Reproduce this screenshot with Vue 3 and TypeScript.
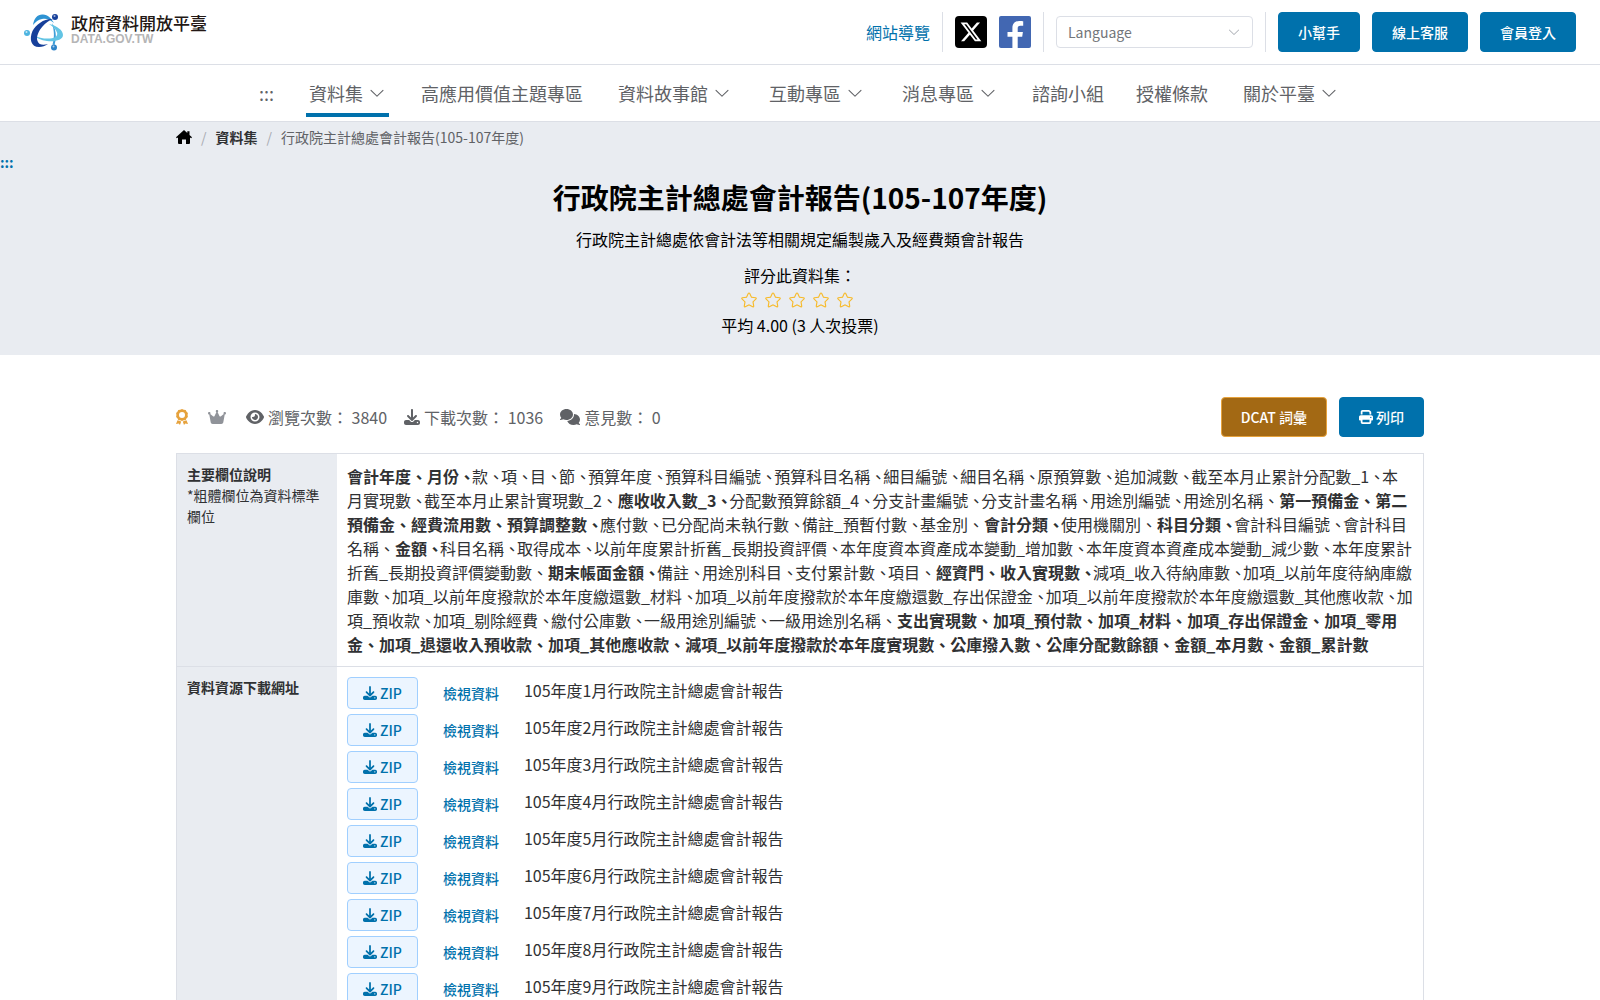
<script setup lang="ts">
interface NavItem {
  label: string
  menu?: boolean
  active?: boolean
}

interface Field {
  name: string
  bold: boolean
}

const navItems: NavItem[] = [
  { label: '資料集', menu: true, active: true },
  { label: '高應用價值主題專區' },
  { label: '資料故事館', menu: true },
  { label: '互動專區', menu: true },
  { label: '消息專區', menu: true },
  { label: '諮詢小組' },
  { label: '授權條款' },
  { label: '關於平臺', menu: true },
]

// Names starting with * are standard fields and are set in bold.
const fieldSource =
  '*會計年度、*月份、款、項、目、節、預算年度、預算科目編號、預算科目名稱、細目編號、細目名稱、原預算數、追加減數、截至本月止累計分配數_1、本月實現數、截至本月止累計實現數_2、*應收收入數_3、分配數預算餘額_4、分支計畫編號、分支計畫名稱、用途別編號、用途別名稱、*第一預備金、*第二預備金、*經費流用數、*預算調整數、應付數、已分配尚未執行數、備註_預暫付數、基金別、*會計分類、使用機關別、*科目分類、會計科目編號、會計科目名稱、*金額、科目名稱、取得成本、以前年度累計折舊_長期投資評價、本年度資本資產成本變動_增加數、本年度資本資產成本變動_減少數、本年度累計折舊_長期投資評價變動數、*期末帳面金額、備註、用途別科目、支付累計數、項目、*經資門、*收入實現數、減項_收入待納庫數、加項_以前年度待納庫繳庫數、加項_以前年度撥款於本年度繳還數_材料、加項_以前年度撥款於本年度繳還數_存出保證金、加項_以前年度撥款於本年度繳還數_其他應收款、加項_預收款、加項_剔除經費、繳付公庫數、一級用途別編號、一級用途別名稱、*支出實現數、*加項_預付款、*加項_材料、*加項_存出保證金、*加項_零用金、*加項_退還收入預收款、*加項_其他應收款、*減項_以前年度撥款於本年度實現數、*公庫撥入數、*公庫分配數餘額、*金額_本月數、*金額_累計數'

const fields: Field[] = fieldSource.split('、').map((entry) => ({
  name: entry.replace('*', ''),
  bold: entry.startsWith('*'),
}))

const separator = (index: number): string => (index < fields.length - 1 ? '、' : '')

const months: number[] = Array.from({ length: 12 }, (_, i) => i + 1)

const arrowPath =
  'M831.872 340.864 512 652.672 192.128 340.864a30.592 30.592 0 0 0-42.752 0 29.12 29.12 0 0 0 0 41.6L489.664 714.24a32 32 0 0 0 44.672 0l340.288-331.712a29.12 29.12 0 0 0 0-41.728 30.592 30.592 0 0 0-42.752 0z'
const starPath =
  'm512 747.84 228.16 119.936a6.4 6.4 0 0 0 9.28-6.72l-43.52-254.08 184.512-179.904a6.4 6.4 0 0 0-3.52-10.88l-255.104-37.12L517.76 147.904a6.4 6.4 0 0 0-11.52 0L392.192 379.072l-255.104 37.12a6.4 6.4 0 0 0-3.52 10.88L318.08 606.976l-43.584 254.08a6.4 6.4 0 0 0 9.28 6.72L512 747.84zM313.6 924.48a70.4 70.4 0 0 1-102.144-74.24l37.888-220.928L88.96 472.96A70.4 70.4 0 0 1 128 352.896l221.76-32.256 99.2-200.96a70.4 70.4 0 0 1 126.208 0l99.2 200.96 221.824 32.256a70.4 70.4 0 0 1 39.04 120.064L774.72 629.376l37.888 220.928a70.4 70.4 0 0 1-102.144 74.24L512 820.096l-198.4 104.32z'
const downloadPath =
  'M288 32c0-17.7-14.3-32-32-32s-32 14.3-32 32V274.7l-73.4-73.4c-12.5-12.5-32.8-12.5-45.3 0s-12.5 32.8 0 45.3l128 128c12.5 12.5 32.8 12.5 45.3 0l128-128c12.5-12.5 12.5-32.8 0-45.3s-32.8-12.5-45.3 0L288 274.7V32zM64 352c-35.3 0-64 28.7-64 64v32c0 35.3 28.7 64 64 64H448c35.3 0 64-28.7 64-64V416c0-35.3-28.7-64-64-64H346.5l-45.3 45.3c-25 25-65.5 25-90.5 0L165.5 352H64zm368 56a24 24 0 1 1 0 48 24 24 0 1 1 0-48z'
</script>

<template>
  <header class="topbar">
    <a class="logo" href="#" aria-label="政府資料開放平臺">
      <svg class="logo-mark" viewBox="0 0 40 38" aria-hidden="true">
        <path d="M9 12C10 5 14 1 19 1.500c5 .5 8 3.500 11 8.500C26 6.500 22 5 18 6c-4 .8-6 2.500-9 6z" fill="#2e93d3" />
        <path d="M28 10c4 6 5 14 2.500 22l-2-.5c2-7 2-13-.5-21.500z" fill="#3e9fd8" />
        <path d="M25 11c8 2 14 6 14 11 0 5-8 7-16 6-6-.8-11-3-14-6 6 3 12 4 17 3.500 6-.6 8-3 7-6-1-3-4-6-8-8.500z" fill="#62c4e4" />
        <path d="M29 6C21 5 12 11 8.500 18 5 26 7 34 15 34c3.500 0 6-1 9-3-5 1.500-9 1-10.500-3-1.500-4 1-10 5-14.500C21.500 10 25 7.500 29 6z" fill="#17409a" />
        <circle cx="31" cy="4" r="3" fill="#17409a" />
        <circle cx="3" cy="20" r="3" fill="#4db4e0" />
        <circle cx="30" cy="34.500" r="3" fill="#2e83c8" />
        <circle cx="30.500" cy="3" r="1" fill="#fff" opacity=".6" />
        <circle cx="2.500" cy="19" r="1" fill="#fff" opacity=".7" />
        <circle cx="29.500" cy="33.500" r="1" fill="#fff" opacity=".6" />
      </svg>
      <span class="logo-text">
        <span class="logo-name">政府資料開放平臺</span>
        <span class="logo-domain">DATA.GOV.TW</span>
      </span>
    </a>
    <div class="tools">
      <a class="sitemap" href="#">網站導覽</a>
      <span class="rule"></span>
      <a class="social" href="#" aria-label="X">
        <svg viewBox="0 0 32 32" aria-hidden="true">
          <rect width="32" height="32" rx="4" fill="#000" />
          <path
            transform="translate(4.400 4.400) scale(.96)"
            d="M18.244 2.250h3.308l-7.227 8.260 8.502 11.240H16.170l-5.214-6.817L4.990 21.750H1.680l7.730-8.835L1.254 2.250H8.080l4.713 6.231zm-1.161 17.520h1.833L7.084 4.126H5.117z"
            fill="#fff"
          />
        </svg>
      </a>
      <a class="social" href="#" aria-label="Facebook">
        <svg viewBox="0 0 32 32" aria-hidden="true">
          <rect width="32" height="32" rx="2" fill="#4267b2" />
          <path d="M13.400 32V20.800H8.500v-4.900h4.900v-3.700c0-4.800 2.800-7.200 6.900-7.200 1.900 0 3.400.2 3.900.3v4.500h-2.800c-2.100 0-2.700 1.100-2.700 2.600v3.500h5.200l-.7 4.900h-4.500V32z" fill="#fff" />
        </svg>
      </a>
      <span class="rule"></span>
      <span class="language">
        <select aria-label="Language">
          <option>Language</option>
        </select>
        <svg class="language-arrow" viewBox="0 0 1024 1024" aria-hidden="true"><path :d="arrowPath" /></svg>
      </span>
      <span class="rule"></span>
      <button class="btn" type="button">小幫手</button>
      <button class="btn" type="button">線上客服</button>
      <button class="btn" type="button">會員登入</button>
    </div>
  </header>

  <nav class="nav">
    <a class="nav-item" href="#">:::</a>
    <a
      v-for="item in navItems"
      :key="item.label"
      class="nav-item"
      :class="{ 'has-menu': item.menu, active: item.active }"
      href="#"
    >
      {{ item.label }}
      <svg v-if="item.menu" viewBox="0 0 1024 1024" aria-hidden="true"><path :d="arrowPath" /></svg>
    </a>
  </nav>

  <section class="hero">
    <div class="container crumbs">
      <a class="home" href="#" aria-label="首頁">
        <svg viewBox="0 0 16 14" aria-hidden="true">
          <path d="M8 0 0 7.200l.8 1L2 7.400V13q0 1 1 1h3V9.500h4V14h3q1 0 1-1V7.400l1.200.8.8-1-2.500-2.300V1.200h-2.200v1.700z" />
        </svg>
      </a>
      <span class="slash">/</span>
      <a class="crumb-link" href="#">資料集</a>
      <span class="slash">/</span>
      <span>行政院主計總處會計報告(105-107年度)</span>
    </div>
    <a class="anchor" href="#">:::</a>
    <h1>行政院主計總處會計報告(105-107年度)</h1>
    <p class="summary">行政院主計總處依會計法等相關規定編製歲入及經費類會計報告</p>
    <p class="rate-label">評分此資料集：</p>
    <div class="stars">
      <button v-for="n in 5" :key="n" type="button" :aria-label="`${n}`">
        <svg viewBox="0 0 1024 1024" aria-hidden="true"><path :d="starPath" /></svg>
      </button>
    </div>
    <p class="average">平均 4.00 (3 人次投票)</p>
  </section>

  <main class="container">
    <div class="meta">
      <svg class="award" viewBox="0 0 12 16" aria-hidden="true">
        <path d="M6 0l1.800.7 1.900.3.900 1.700 1.300 1.400-.3 1.900.3 1.900-1.300 1.400-.9 1.700-1.900.3L6 12l-1.800-.7-1.900-.3-.9-1.700L.1 7.900.4 6 .1 4.100l1.300-1.400L2.300 1l1.900-.3zM6 3a3 3 0 1 0 0 6 3 3 0 0 0 0-6z" fill-rule="evenodd" />
        <path d="M1.500 11.300l1.700.5 2 .8L4 16l-1.300-1.400L0 15zM10.500 11.300l-1.700.5-2 .8L8 16l1.300-1.400L12 15z" />
      </svg>
      <svg class="crown" viewBox="0 0 576 512" aria-hidden="true">
        <path d="M309 106c11.400-7 19-19.700 19-34c0-22.100-17.900-40-40-40s-40 17.900-40 40c0 14.400 7.600 27 19 34L209.700 220.600c-9.100 18.200-32.700 23.400-48.600 10.700L72 160c5-6.700 8-15 8-24c0-22.100-17.900-40-40-40S0 113.900 0 136s17.900 40 40 40c.2 0 .5 0 .7 0L86.400 427.400c5.500 30.400 32 52.600 63 52.600H426.600c30.900 0 57.400-22.100 63-52.600L535.300 176c.2 0 .5 0 .7 0c22.100 0 40-17.900 40-40s-17.900-40-40-40s-40 17.900-40 40c0 9 3 17.300 8 24l-89.100 71.300c-15.900 12.700-39.500 7.500-48.600-10.700L309 106z" />
      </svg>
      <span class="stat">
        <svg class="eye" viewBox="0 0 576 512" aria-hidden="true">
          <path d="M288 32c-80.800 0-145.500 36.800-192.600 80.600C48.600 156 17.300 208 2.500 243.700c-3.300 7.900-3.300 16.700 0 24.600C17.300 304 48.600 356 95.400 399.400C142.500 443.200 207.200 480 288 480s145.500-36.800 192.600-80.600c46.800-43.500 78.100-95.400 93-131.100c3.300-7.900 3.300-16.700 0-24.600c-14.900-35.700-46.200-87.700-93-131.100C433.500 68.800 368.800 32 288 32zM144 256a144 144 0 1 1 288 0 144 144 0 1 1 -288 0zm144-64c0 35.300-28.700 64-64 64c-7.100 0-13.900-1.200-20.300-3.300c-5.500-1.800-11.900 1.600-11.700 7.400c.3 6.900 1.300 13.800 3.200 20.700c13.700 51.200 66.400 81.600 117.600 67.900s81.600-66.400 67.900-117.600c-11.100-41.500-47.800-69.400-88.600-71.100c-5.800-.2-9.200 6.100-7.400 11.700c2.100 6.400 3.300 13.200 3.300 20.300z" />
        </svg>
        瀏覽次數： 3840
      </span>
      <span class="stat">
        <svg class="download" viewBox="0 0 512 512" aria-hidden="true"><path :d="downloadPath" /></svg>
        下載次數： 1036
      </span>
      <span class="stat">
        <svg class="comments" viewBox="0 0 640 512" aria-hidden="true">
          <path d="M208 352c114.900 0 208-78.800 208-176S322.900 0 208 0S0 78.800 0 176c0 38.600 14.700 74.300 39.600 103.400c-3.500 9.400-8.700 17.700-14.200 24.700c-4.800 6.200-9.700 11-13.300 14.300c-1.800 1.600-3.300 2.900-4.300 3.700c-.5 .4-.9 .7-1.100 .8l-.2 .2C1 327.200-1.400 334.400 .8 340.900S9.100 352 16 352c21.800 0 43.800-5.600 62.100-12.500c9.200-3.500 17.800-7.400 25.200-11.400C134.100 343.300 169.800 352 208 352zM448 176c0 112.300-99.100 196.900-216.500 207C255.800 457.400 336.400 512 432 512c38.200 0 73.900-8.700 104.700-23.900c7.500 4 16 7.900 25.200 11.400c18.300 6.900 40.300 12.500 62.100 12.500c6.900 0 13.100-4.500 15.200-11.100c2.100-6.600-.2-13.800-5.800-17.900l-.2-.2c-.2-.2-.6-.4-1.100-.8c-1-.8-2.500-2-4.300-3.700c-3.600-3.300-8.500-8.100-13.300-14.300c-5.500-7-10.700-15.400-14.200-24.700c24.900-29 39.600-64.700 39.600-103.400c0-92.800-84.900-168.900-192.600-175.500c.4 5.100 .6 10.300 .6 15.500z" />
        </svg>
        意見數： 0
      </span>
      <span class="actions">
        <button class="btn dcat" type="button">DCAT 詞彙</button>
        <button class="btn" type="button">
          <svg viewBox="0 0 512 512" aria-hidden="true">
            <path d="M128 0C92.700 0 64 28.700 64 64v96h64V64H354.700L384 93.300V160h64V93.300c0-17-6.700-33.300-18.700-45.300L400 18.700C388 6.700 371.700 0 354.700 0H128zM384 352v32 64H128V384 368 352H384zm64 32h32c17.700 0 32-14.300 32-32V256c0-35.300-28.700-64-64-64H64c-35.300 0-64 28.700-64 64v96c0 17.700 14.300 32 32 32H64v64c0 35.300 28.700 64 64 64H384c35.300 0 64-28.700 64-64V384zM432 248a24 24 0 1 1 0 48 24 24 0 1 1 0-48z" />
          </svg>
          列印
        </button>
      </span>
    </div>

    <table class="detail">
      <tbody>
        <tr>
          <th scope="row">
            主要欄位說明
            <span class="note">*粗體欄位為資料標準欄位</span>
          </th>
          <td>
            <span
              v-for="(field, i) in fields"
              :key="i"
              :class="field.bold ? 'standard' : 'plain'"
            >{{ field.name }}{{ separator(i) }}</span>
          </td>
        </tr>
        <tr>
          <th scope="row">資料資源下載網址</th>
          <td>
            <ul class="files">
              <li v-for="m in months" :key="m">
                <button class="zip" type="button">
                  <svg viewBox="0 0 512 512" aria-hidden="true"><path :d="downloadPath" /></svg>
                  ZIP
                </button>
                <a class="view" href="#">檢視資料</a>
                <span class="file-name">105年度{{ m }}月行政院主計總處會計報告</span>
              </li>
            </ul>
          </td>
        </tr>
      </tbody>
    </table>
  </main>
</template>

<style>
body {
  margin: 0;
  background: #fff;
  color: #303133;
  font-family: "Noto Sans CJK TC", "Noto Sans", sans-serif;
  font-size: 16px;
  line-height: 24px;
}
</style>

<style scoped>
a {
  color: inherit;
  text-decoration: none;
}

button,
select {
  font-family: inherit;
}

svg {
  display: block;
  flex: none;
  fill: currentColor;
}

.container {
  width: 78%;
  margin: 0 auto;
}

.topbar {
  display: flex;
  align-items: center;
  justify-content: space-between;
  height: 64px;
  padding: 0 24px;
  border-bottom: 1px solid #dcdfe6;
}

.logo {
  display: flex;
  align-items: center;
  gap: 7px;
}

.logo-mark {
  width: 40px;
  height: 38px;
}

.logo-text {
  display: flex;
  flex-direction: column;
  padding-bottom: 4px;
}

.logo-name {
  color: #231815;
  font-size: 17px;
  font-weight: 500;
  line-height: 18px;
}

.logo-domain {
  color: #b5b5b6;
  font-family: "Liberation Sans", sans-serif;
  font-size: 12px;
  font-weight: 700;
  line-height: 14px;
}

.tools {
  display: flex;
  align-items: center;
  gap: 12px;
}

.sitemap {
  color: #0071ac;
}

.rule {
  width: 1px;
  height: 40px;
  background: #dcdfe6;
}

.social svg {
  width: 32px;
  height: 32px;
}

.language {
  display: grid;
  align-items: center;
}

.language select {
  grid-area: 1 / 1;
  box-sizing: border-box;
  width: 197px;
  height: 32px;
  padding: 0 11px;
  border: 1px solid #dcdfe6;
  border-radius: 4px;
  background: #fff;
  color: #73767a;
  font-size: 14px;
  appearance: none;
}

.language-arrow {
  grid-area: 1 / 1;
  justify-self: end;
  width: 14px;
  height: 14px;
  margin-right: 12px;
  color: #a8abb2;
  pointer-events: none;
}

.btn {
  display: flex;
  align-items: center;
  gap: 3px;
  height: 40px;
  padding: 0 19px;
  border: 1px solid #0071ac;
  border-radius: 4px;
  background: #0071ac;
  color: #fff;
  font-size: 14px;
  font-weight: 500;
}

.btn svg {
  width: 14px;
  height: 14px;
}

.btn.dcat {
  border-color: #e6a23c;
  background: #a36914;
}

.nav {
  display: flex;
  justify-content: center;
  gap: 32px;
  height: 56px;
  border-bottom: 1px solid #dcdfe6;
  color: #606266;
  font-size: 18px;
}

.nav-item {
  display: flex;
  align-items: center;
  gap: 5px;
  height: 48px;
  margin-top: 4px;
  box-sizing: border-box;
  border-top: 4px solid transparent;
  border-bottom: 4px solid transparent;
}

.nav-item.has-menu {
  padding: 0 3px;
}

.nav-item.active {
  border-bottom-color: #0071ac;
}

.nav-item svg {
  width: 18px;
  height: 18px;
}

.hero {
  display: flow-root;
  padding-bottom: 18px;
  background: #e9ecf1;
  color: #000;
  text-align: center;
}

.crumbs {
  display: flex;
  align-items: center;
  height: 30px;
  color: #606266;
  font-size: 14px;
}

.home {
  color: #000;
}

.home svg {
  width: 16px;
  height: 14px;
}

.slash {
  margin: 0 9px;
  color: #a8abb2;
}

.crumb-link {
  color: #303133;
  font-weight: 700;
}

.anchor {
  display: block;
  height: 20px;
  color: #0071ac;
  font-size: 14px;
  font-weight: 700;
  line-height: 20px;
  text-align: left;
}

h1 {
  margin: 5px 0 0;
  font-size: 28px;
  font-weight: 700;
  line-height: 40px;
}

p {
  margin: 0;
}

.summary {
  margin-top: 10px;
}

.rate-label {
  margin-top: 12px;
}

.stars {
  display: flex;
  justify-content: center;
  height: 26px;
}

.stars button {
  display: flex;
  align-items: center;
  padding: 0 6px 0 0;
  border: 0;
  background: none;
  color: #f7ba2a;
}

.stars svg {
  width: 18px;
  height: 18px;
}

.meta {
  display: flex;
  align-items: center;
  height: 40px;
  margin: 42px 0 16px;
  color: #606266;
}

.award {
  width: 12px;
  height: 16px;
  margin-right: 20px;
  color: #e6a23c;
}

.crown {
  width: 18px;
  height: 16px;
  margin-right: 20px;
  color: #909399;
}

.stat {
  display: flex;
  align-items: center;
  gap: 4px;
  margin-right: 17px;
}

.eye {
  width: 18px;
  height: 16px;
}

.download {
  width: 16px;
  height: 16px;
}

.comments {
  width: 20px;
  height: 16px;
}

.actions {
  display: flex;
  gap: 12px;
  margin-left: auto;
}

.detail {
  width: 100%;
  border: 1px solid #dcdfe6;
  border-spacing: 0;
  table-layout: fixed;
}

.detail th,
.detail td {
  padding: 10px;
  text-align: left;
  vertical-align: top;
}

.detail th {
  box-sizing: border-box;
  width: 160px;
  background: #e9ecf1;
  font-size: 14px;
  font-weight: 700;
  line-height: 21px;
}

.detail tr + tr > * {
  border-top: 1px solid #dcdfe6;
}

.note {
  display: block;
  font-weight: 400;
}

.standard {
  font-weight: 700;
}

.plain {
  margin-left: -3px;
}

.files {
  margin: 0;
  padding: 0;
  list-style: none;
}

.files li {
  display: flex;
  align-items: center;
  margin-bottom: 5px;
}

.zip {
  display: flex;
  align-items: center;
  gap: 3px;
  height: 32px;
  padding: 0 15px;
  border: 1px solid #a0cfff;
  border-radius: 4px;
  background: #ecf5ff;
  color: #0071ac;
  font-size: 14px;
  font-weight: 500;
}

.zip svg {
  width: 14px;
  height: 14px;
}

.view {
  margin: 0 25px;
  color: #0071ac;
  font-size: 14px;
  font-weight: 500;
}

.file-name {
  padding-bottom: 6px;
}
</style>
